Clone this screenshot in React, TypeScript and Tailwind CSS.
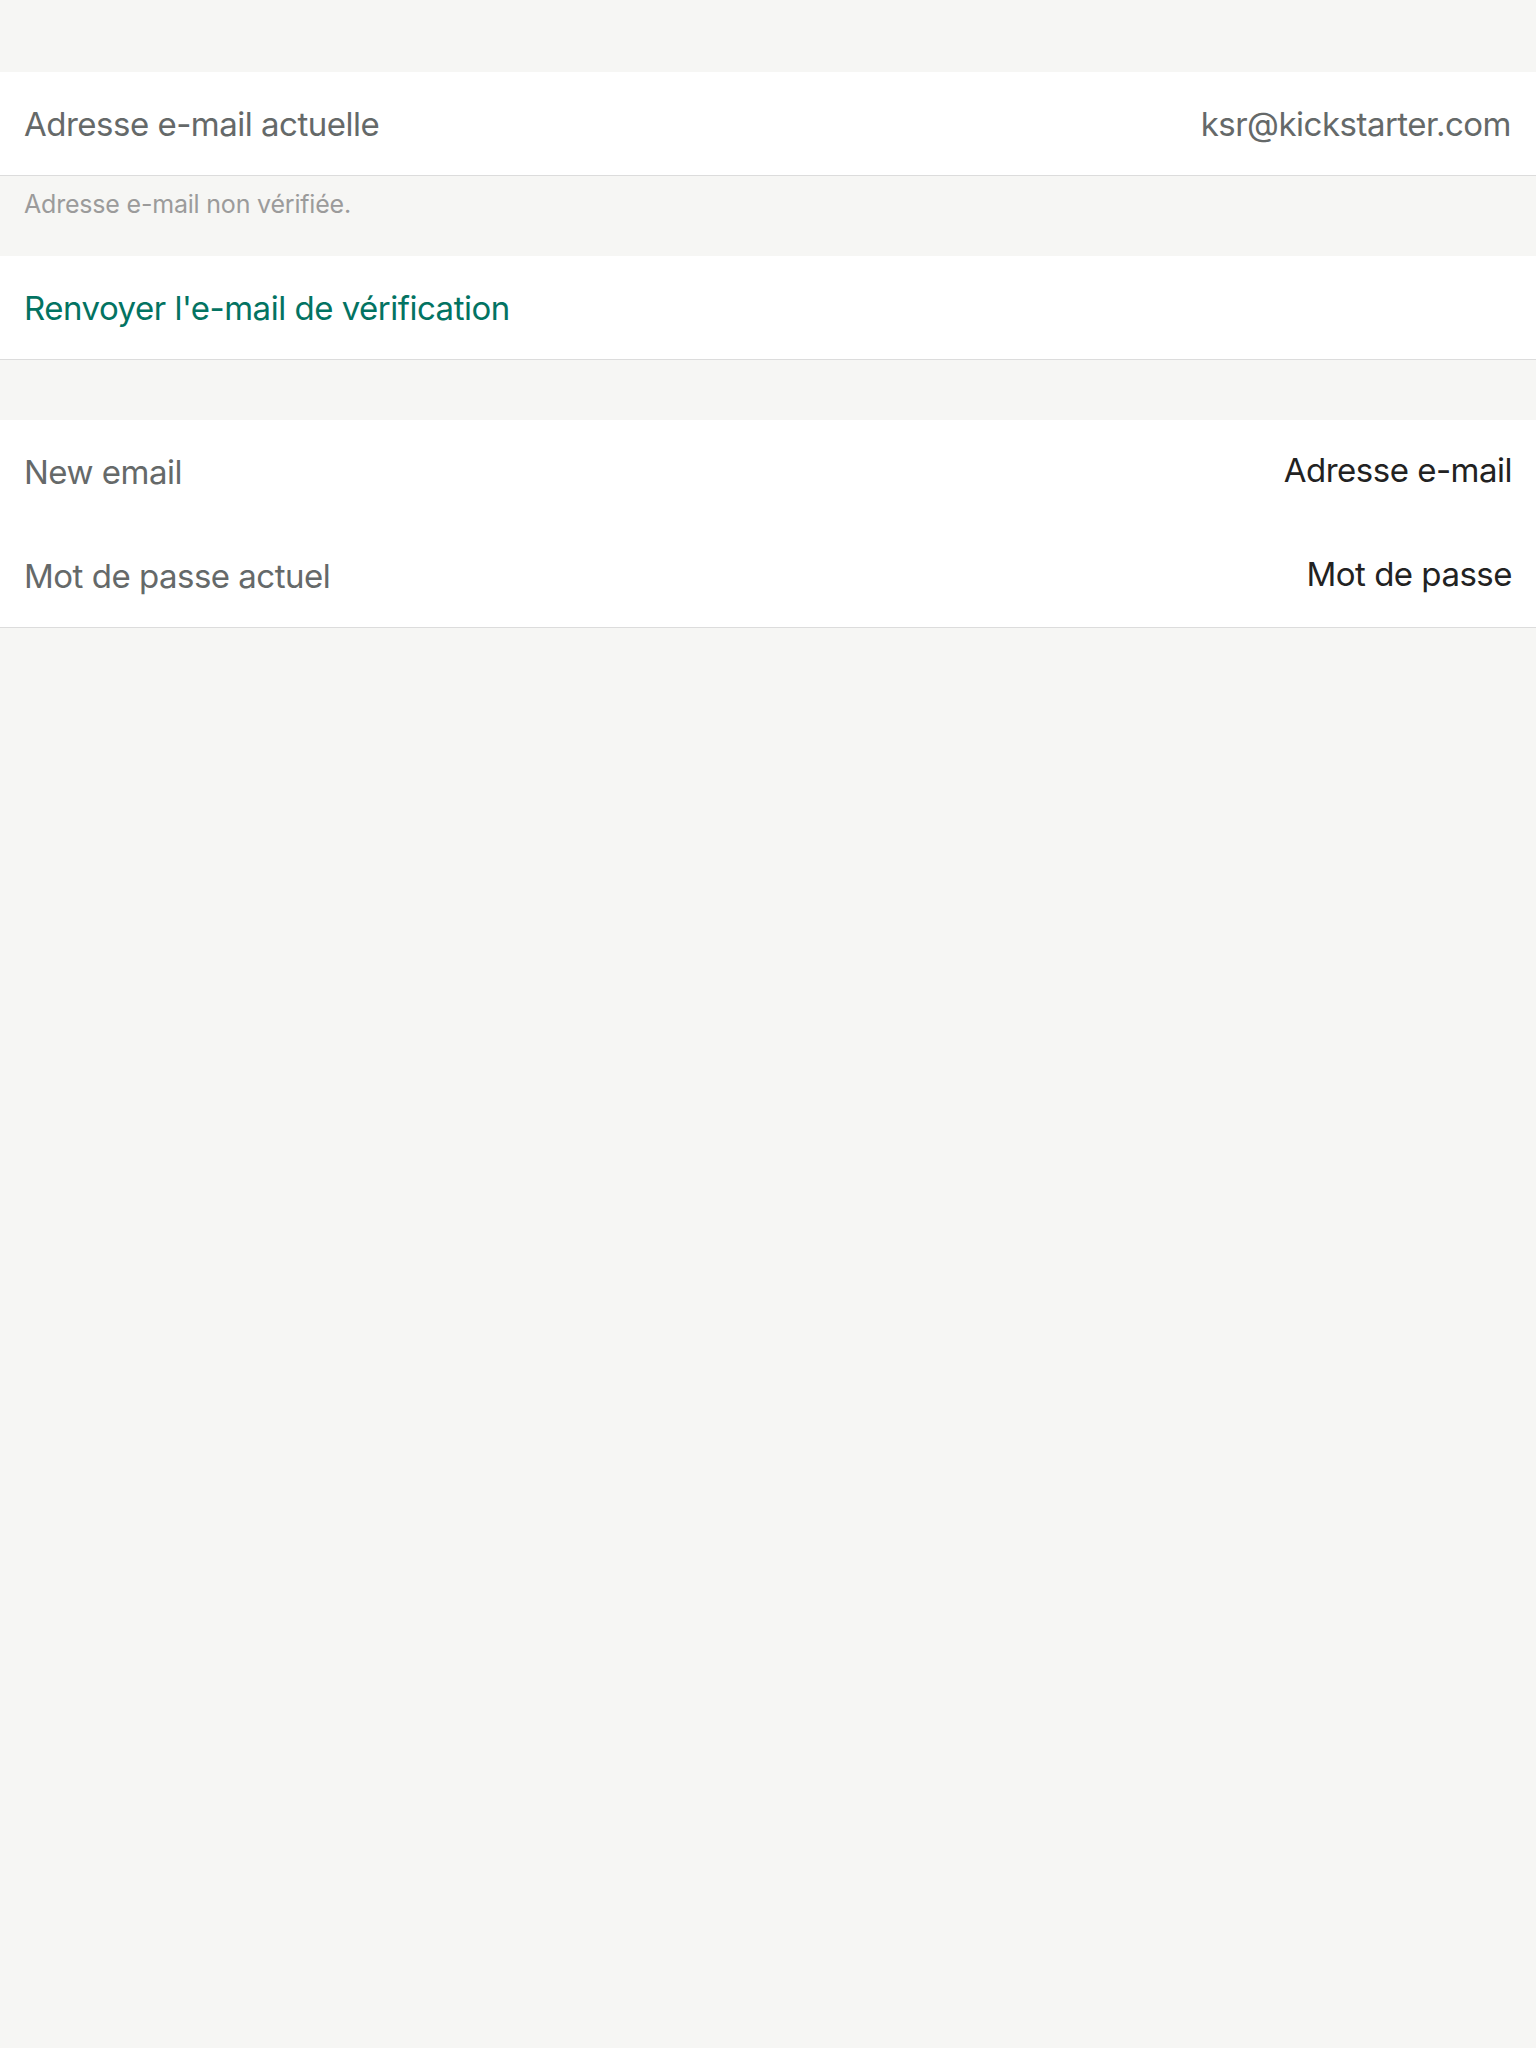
import React from "react";

const font = { fontFamily: "Inter, 'Noto Sans', sans-serif" };

export default function App() {
  return (
    <div className="min-h-[2048px] w-full bg-[#f6f6f4]" style={font}>
      <div className="h-[72px]" />
      <div className="flex h-[104px] items-center justify-between border-b border-[#dcdcdc] bg-white pl-[24px] pr-[25px] pt-[2px]">
        <span className="text-[33px] text-[#656969] tracking-[-0.5px]">Adresse e-mail actuelle</span>
        <span className="text-[33px] text-[#656969] tracking-[-0.5px]">ksr@kickstarter.com</span>
      </div>
      <div className="h-[80px] px-[24px] pt-[10px]">
        <span className="text-[25px] text-[#9b9b9b] tracking-[-0.2px]">Adresse e-mail non vérifiée.</span>
      </div>
      <div className="flex h-[104px] items-center border-b border-[#dcdcdc] bg-white px-[24px] pt-[2px]">
        <span className="text-[33px] text-[#037362] tracking-[-0.5px]">Renvoyer l'e-mail de vérification</span>
      </div>
      <div className="h-[60px]" />
      <div className="border-b border-[#dcdcdc] bg-white">
        <div className="flex h-[104px] items-center justify-between pl-[24px] pr-[24px] pt-[2px]">
          <span className="text-[33px] text-[#656969] tracking-[-0.5px]">New email</span>
          <span className="-mt-[4px] text-[33px] text-[#222222] tracking-[-0.5px]">Adresse e-mail</span>
        </div>
        <div className="flex h-[103px] items-center justify-between pl-[24px] pr-[24px] pt-[2px]">
          <span className="text-[33px] text-[#656969] tracking-[-0.5px]">Mot de passe actuel</span>
          <span className="-mt-[4px] text-[33px] text-[#222222] tracking-[-0.5px]">Mot de passe</span>
        </div>
      </div>
    </div>
  );
}
